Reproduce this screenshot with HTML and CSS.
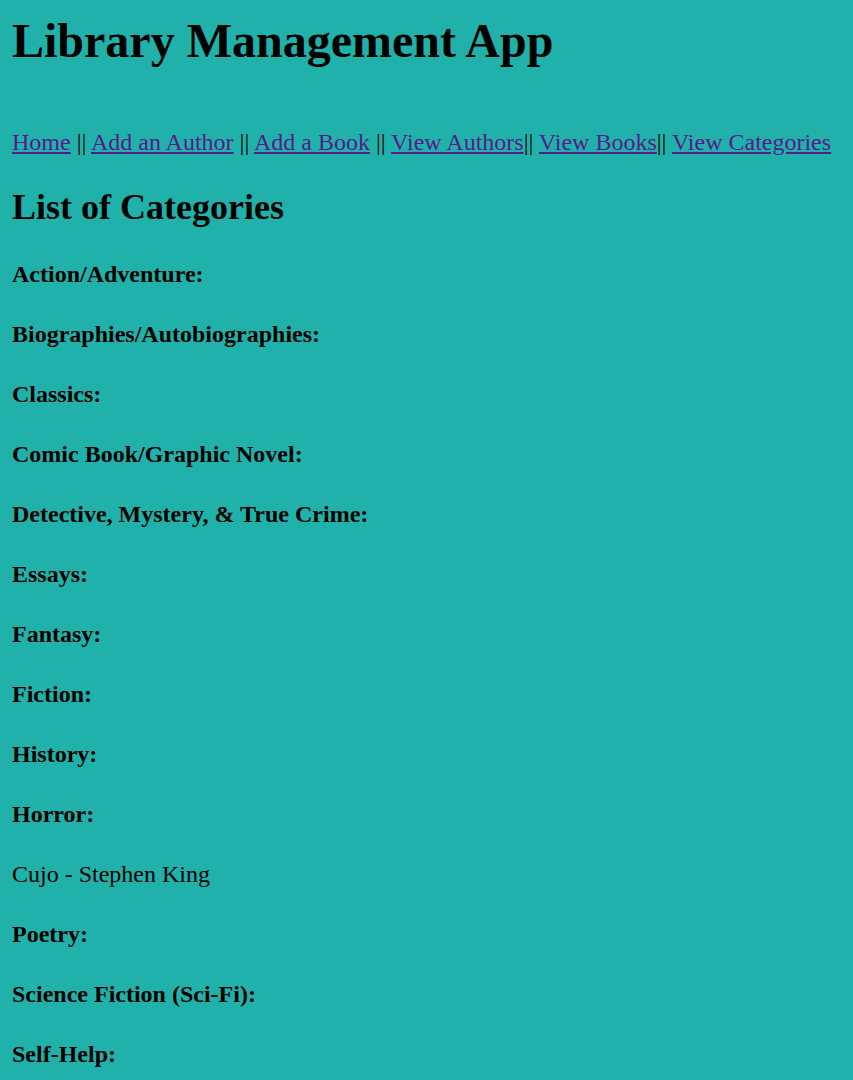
FILE: index.html
```html
<!DOCTYPE html>
<html>
<head>
<meta charset="utf-8">
<title>Library Management App</title>
<link rel="stylesheet" href="styles.css">
</head>
<body>
<h1 class="title">Library Management App</h1>
<nav class="nav"><a href="#">Home</a> || <a href="#">Add an Author</a> || <a href="#">Add a Book</a> || <a href="#">View Authors</a>|| <a href="#">View Books</a>|| <a href="#">View Categories</a></nav>
<h2 class="heading">List of Categories</h2>
<h4 class="cat">Action/Adventure:</h4>
<h4 class="cat">Biographies/Autobiographies:</h4>
<h4 class="cat">Classics:</h4>
<h4 class="cat">Comic Book/Graphic Novel:</h4>
<h4 class="cat">Detective, Mystery, &amp; True Crime:</h4>
<h4 class="cat">Essays:</h4>
<h4 class="cat">Fantasy:</h4>
<h4 class="cat">Fiction:</h4>
<h4 class="cat">History:</h4>
<h4 class="cat">Horror:</h4>
<p class="book">Cujo - Stephen King</p>
<h4 class="cat">Poetry:</h4>
<h4 class="cat">Science Fiction (Sci-Fi):</h4>
<h4 class="cat">Self-Help:</h4>
</body>
</html>
```
FILE: styles.css
```css
html, body {
  background: #20b2aa;
}
body {
  margin: 13px 12px 12px;
  font-family: "Liberation Serif", "Times New Roman", serif;
  font-size: 24px;
  line-height: 28px;
  color: #000;
}
.title {
  font-size: 48px;
  line-height: 55px;
  font-weight: bold;
  margin: 0 0 60px;
}
.nav {
  display: block;
  margin: 0;
  white-space: nowrap;
}
.nav a {
  color: #551a8b;
  text-decoration: underline;
}
.heading {
  font-size: 36px;
  line-height: 42px;
  font-weight: bold;
  margin: 30px 0 29px;
}
.cat {
  font-size: 24px;
  font-weight: bold;
  margin: 32px 0;
}
.book {
  margin: 24px 0;
}
```
